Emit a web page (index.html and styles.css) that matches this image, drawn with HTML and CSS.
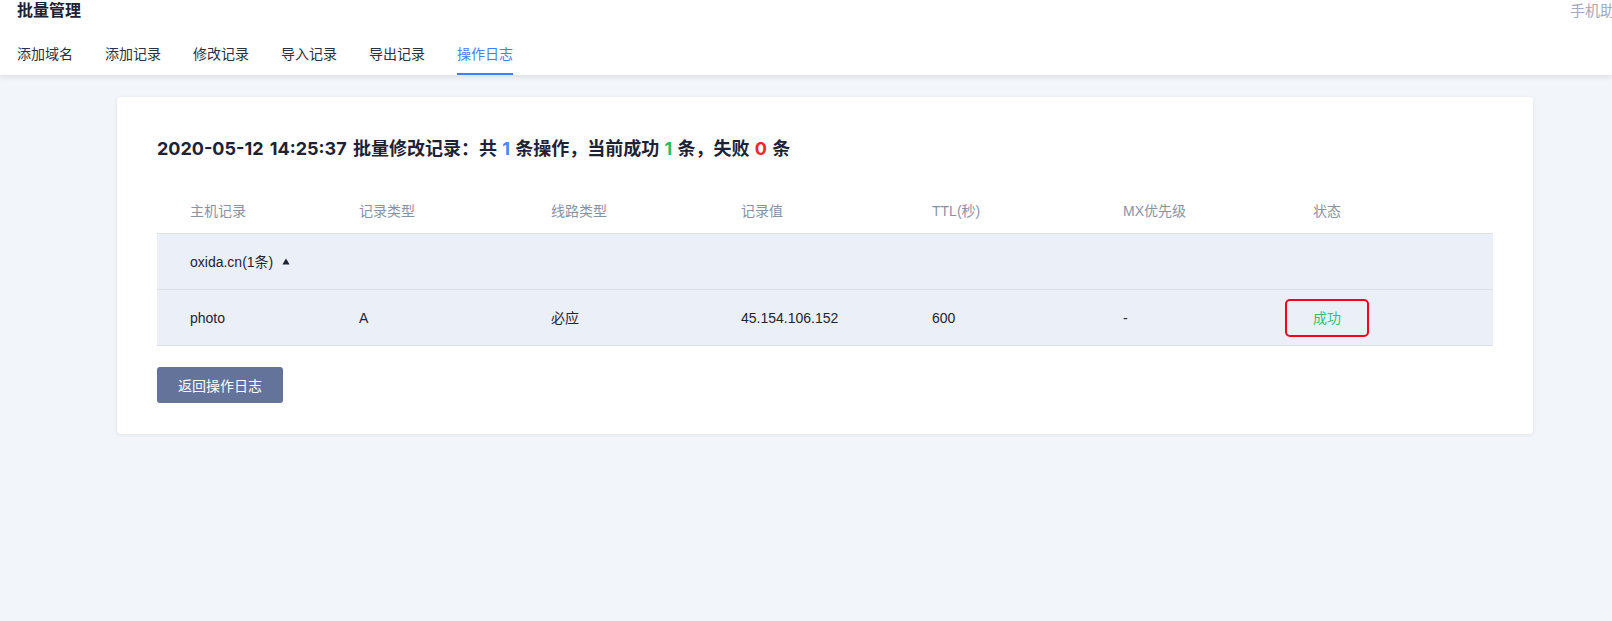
FILE: index.html
```html
<!DOCTYPE html>
<html lang="zh-CN">
<head>
<meta charset="utf-8">
<title>批量管理</title>
<link rel="stylesheet" href="styles.css">
</head>
<body>
<header class="topbar">
  <div class="topbar-row">
    <h1 class="page-title">批量管理</h1>
    <span class="helper">手机助手</span>
  </div>
  <nav class="tabs">
    <a class="tab">添加域名</a>
    <a class="tab">添加记录</a>
    <a class="tab">修改记录</a>
    <a class="tab">导入记录</a>
    <a class="tab">导出记录</a>
    <a class="tab active">操作日志</a>
  </nav>
</header>
<main class="main">
  <section class="card">
    <h2 class="summary"><span class="stamp">2020-05-12</span> <span class="stamp">14:25:37</span> 批量修改记录：共 <span class="num blue">1</span> 条操作，当前成功 <span class="num green">1</span> 条，失败 <span class="num red">0</span> 条</h2>
    <div class="table">
      <div class="row head">
        <div class="cell">主机记录</div>
        <div class="cell">记录类型</div>
        <div class="cell">线路类型</div>
        <div class="cell">记录值</div>
        <div class="cell">TTL(秒)</div>
        <div class="cell">MX优先级</div>
        <div class="cell"><span class="status-head">状态</span></div>
      </div>
      <div class="row group">
        <div class="cell group-cell">oxida.cn(1条)<svg class="caret" width="8" height="7" viewBox="0 0 8 7"><path d="M4 0.5 L7.6 6.5 L0.4 6.5 Z" fill="#1e2433"/></svg></div>
      </div>
      <div class="row data">
        <div class="cell">photo</div>
        <div class="cell">A</div>
        <div class="cell">必应</div>
        <div class="cell">45.154.106.152</div>
        <div class="cell">600</div>
        <div class="cell">-</div>
        <div class="cell"><span class="status-box">成功</span></div>
      </div>
    </div>
    <button class="back-btn">返回操作日志</button>
  </section>
</main>
</body>
</html>
```
FILE: styles.css
```css
* { box-sizing: border-box; }
html, body {
  margin: 0;
  padding: 0;
}
body {
  width: 1612px;
  height: 621px;
  overflow: hidden;
  background: #f2f5f9;
  font-family: "Liberation Sans", "Noto Sans CJK SC", sans-serif;
  color: #1e2433;
}
.topbar {
  background: #fff;
  height: 75px;
  padding: 0 0 0 17px;
  box-shadow: 0 2px 5px rgba(30, 45, 80, 0.10);
  position: relative;
  z-index: 1;
}
.topbar-row {
  display: flex;
  justify-content: space-between;
  align-items: center;
  height: 22px;
  margin-bottom: 11px;
}
.page-title {
  margin: 0;
  font-size: 16px;
  font-weight: bold;
  line-height: 22px;
  color: #1c2233;
}
.helper {
  font-size: 15px;
  color: #a2aabb;
  white-space: nowrap;
  margin-right: -18px;
  line-height: 22px;
}
.tabs {
  display: flex;
  gap: 32px;
}
.tab {
  font-size: 14px;
  line-height: 20px;
  padding: 11px 0 9px;
  border-bottom: 2px solid transparent;
  color: #2a3142;
  cursor: pointer;
}
.tab.active {
  color: #3f82f7;
  border-bottom-color: #3f82f7;
}
.main {
  padding: 22px 79px 0 117px;
}
.card {
  background: #fff;
  border-radius: 4px;
  box-shadow: 0 1px 4px rgba(30, 45, 80, 0.09);
  padding: 39px 40px 31px;
}
.summary {
  margin: 0 0 26px;
  font-size: 18px;
  line-height: 26px;
  font-weight: bold;
  color: #1e2235;
  font-family: "Inter", "Noto Sans CJK SC", sans-serif;
}
.stamp { margin-right: 2px; }
.num { padding: 0 1px; }
.blue { color: #4a88f5; }
.green { color: #23c063; }
.red { color: #f2262f; }
.table {
  font-size: 14px;
}
.row {
  display: grid;
  grid-template-columns: 169px 192px 190px 191px 191px 162px 1fr;
  align-items: center;
  border-bottom: 1px solid #dcdfe6;
}
.row.head {
  height: 46px;
  color: #8892a7;
  background: #fff;
}
.row.group, .row.data {
  height: 56px;
  background: #ebf0f8;
}
.row.group {
  grid-template-columns: 1fr;
}
.cell {
  padding-left: 33px;
  line-height: 20px;
}
.group-cell {
  display: flex;
  align-items: center;
}
.caret {
  margin-left: 9px;
}
.status-head {
  display: inline-block;
  width: 84px;
  text-align: center;
}
.status-box {
  display: inline-block;
  width: 84px;
  height: 38px;
  line-height: 34px;
  text-align: center;
  border: 2px solid #f5021f;
  border-radius: 5px;
  color: #2cc46c;
  vertical-align: middle;
}
.back-btn {
  display: block;
  margin-top: 21px;
  height: 36px;
  padding: 0 21px;
  border: none;
  border-radius: 3px;
  background: #63739a;
  color: #fff;
  font-family: "Liberation Sans", "Noto Sans CJK SC", sans-serif;
  font-size: 14px;
  cursor: pointer;
}
```
